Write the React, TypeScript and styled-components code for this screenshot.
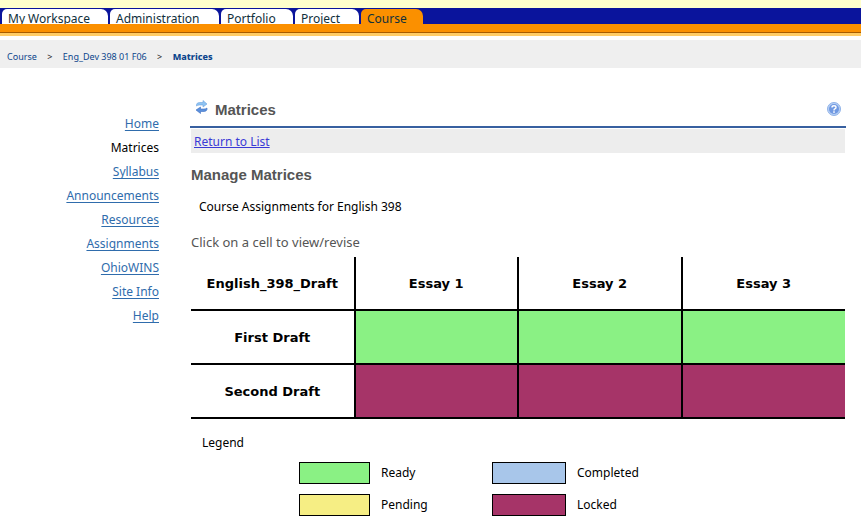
import React from "react";
import styled, { createGlobalStyle } from "styled-components";

const GlobalStyle = createGlobalStyle`
  * { box-sizing: border-box; }
  body {
    margin: 0;
    background: #fff;
    color: #000;
    font-family: "Noto Sans", "Open Sans", sans-serif;
    font-size: 12px;
    line-height: 16px;
  }
`;

const TabBar = styled.nav`
  display: flex;
  gap: 2px;
  height: 36px;
  padding: 1px 2px 0;
  border-top: 8px solid #ffffcc;
  border-bottom: 3px solid #ffcc66;
  background: linear-gradient(#0a149c 0 16px, #fb9000 16px 24px, #a85c00 24px);
`;

const Tab = styled.a<{ $width: number; $active?: boolean }>`
  width: ${(p) => p.$width}px;
  height: 15px;
  padding-left: 6px;
  overflow: hidden;
  border-radius: 5px 7px 0 0;
  background: ${(p) => (p.$active ? "#fb9000" : "#fff")};
  color: #10303c;
  font-size: 12px;
  line-height: 20px;
  text-decoration: none;
  white-space: nowrap;
`;

const Breadcrumbs = styled.nav`
  display: flex;
  align-items: center;
  height: 28px;
  margin-top: 4px;
  padding: 6px 7px 0;
  background: #efefef;
  color: #222;
  font-size: 9px;
`;

const Crumb = styled.a<{ $current?: boolean }>`
  color: #0c458c;
  font-weight: ${(p) => (p.$current ? 800 : 400)};
  text-decoration: none;
`;

const Separator = styled.span`
  width: 26px;
  text-align: center;
`;

const Body = styled.div`
  display: grid;
  grid-template-columns: 159px minmax(0, 1fr);
  column-gap: 32px;
  padding: 29px 16px 0 0;
`;

const ToolList = styled.ul`
  display: flex;
  flex-direction: column;
  gap: 8px;
  margin: 0;
  padding: 19px 0 0;
  list-style: none;
  text-align: right;
`;

const ToolLink = styled.a<{ $current?: boolean }>`
  color: ${(p) => (p.$current ? "#000" : "#2f6cac")};
  text-decoration: ${(p) => (p.$current ? "none" : "underline")};
  text-decoration-skip-ink: none;
  text-underline-offset: 2px;
`;

const ToolHeader = styled.header`
  display: flex;
  align-items: center;
  gap: 7px;
  height: 31px;
  margin: 0 -1px;
  padding: 0 5px 6px;
  border-bottom: 2px solid #3860a0;
`;

const ToolTitle = styled.h1`
  flex: 1;
  margin: 0;
  padding-top: 3px;
  color: #555;
  font-family: "Liberation Sans", sans-serif;
  font-size: 15px;
  line-height: 18px;
`;

const IconButton = styled.button<{ $raised?: boolean }>`
  display: flex;
  padding: 0 0 ${(p) => (p.$raised ? 4 : 0)}px;
  border: 0;
  background: none;
  cursor: pointer;
`;

const ActionBar = styled.div`
  height: 24px;
  margin-top: 1px;
  padding: 5px 3px 0;
  background: #ededed;
`;

const ActionLink = styled.a`
  color: #3a3ad6;
`;

const SectionTitle = styled.h2`
  margin: 13px 0 0;
  color: #555;
  font-family: "Liberation Sans", sans-serif;
  font-size: 15px;
  line-height: 18px;
`;

const Description = styled.p`
  margin: 15px 8px 0;
`;

const Hint = styled.p`
  margin: 19px 0 0;
  color: #555;
  font-size: 13px;
`;

const Matrix = styled.table`
  width: 100%;
  margin-top: 7px;
  border-collapse: collapse;
  table-layout: fixed;
`;

const HeadCell = styled.th`
  height: 54px;
  padding: 2px 0 0;
  border-right: 2px solid #000;
  border-bottom: 2px solid #000;
  font-family: "DejaVu Sans", sans-serif;
  font-size: 13px;
  font-weight: 700;
  thead & { height: 53px; }
  &:last-child { border-right: 0; }
`;

const StatusCell = styled.td<{ $color: string }>`
  padding: 0;
  border-right: 2px solid #000;
  border-bottom: 2px solid #000;
  background: ${(p) => p.$color};
  &:last-child { border-right: 0; }
`;

const LegendTitle = styled.h3`
  margin: 16px 11px 0;
  font-size: 12px;
  font-weight: 400;
`;

const Legend = styled.ul`
  display: grid;
  grid-template-columns: 193px 193px;
  row-gap: 10px;
  margin: 11px 0 0 108px;
  padding: 0;
  list-style: none;
`;

const LegendItem = styled.li`
  display: flex;
  align-items: center;
  gap: 11px;
`;

const Swatch = styled.span<{ $color: string; $wide?: boolean }>`
  width: ${(p) => (p.$wide ? 74 : 71)}px;
  height: 22px;
  border: 1px solid #000;
  background: ${(p) => p.$color};
`;

const RefreshIcon = () => (
  <svg width="13" height="14" viewBox="0 0 13 14" aria-hidden="true">
    <path d="M1.5 6 V4.5 Q2 2.5 4.5 2.5 H8 V.5 L12 4 L8 7 V5 H4.5 Q2.5 5 1.5 6Z" fill="#8fc4f2" stroke="#6ba2e0" strokeWidth=".6" />
    <path d="M12 8 V9.5 Q11.5 11.5 9 11.5 H5.5 V13.5 L1 10 L5.5 7 V9 H9 Q11 9 12 8Z" fill="#5b90dc" stroke="#3c6fc2" strokeWidth=".6" />
  </svg>
);

const HelpIcon = () => (
  <svg width="14" height="14" viewBox="0 0 14 14" aria-hidden="true">
    <circle cx="7" cy="7" r="6.5" fill="#b8d0f4" stroke="#8fb2e8" />
    <circle cx="7" cy="7" r="5" fill="#7099e2" />
    <path d="M5 5.5 Q5 3.8 7 3.8 Q9 3.8 9 5.4 Q9 6.3 7.8 6.9 Q7 7.3 7 8.4" fill="none" stroke="#fff" strokeWidth="1.4" />
    <rect x="6.2" y="9.3" width="1.6" height="1.5" fill="#fff" />
  </svg>
);

const tabs = [
  { label: "My Workspace", width: 106 },
  { label: "Administration", width: 109 },
  { label: "Portfolio", width: 72 },
  { label: "Project", width: 64 },
  { label: "Course", width: 62 },
];

const tools = ["Home", "Matrices", "Syllabus", "Announcements", "Resources", "Assignments", "OhioWINS", "Site Info", "Help"];

const status = { ready: "#8af184", pending: "#f6ee84", completed: "#a8c6ea", locked: "#a63468" };

const columns = ["Essay 1", "Essay 2", "Essay 3"];
const rows = [
  { label: "First Draft", color: status.ready },
  { label: "Second Draft", color: status.locked },
];

const legend = [
  { label: "Ready", color: status.ready },
  { label: "Completed", color: status.completed, wide: true },
  { label: "Pending", color: status.pending },
  { label: "Locked", color: status.locked, wide: true },
];

export default function App() {
  return (
    <>
      <GlobalStyle />
      <TabBar aria-label="Sites">
        {tabs.map((t) => (
          <Tab key={t.label} href="#" $width={t.width} $active={t.label === "Course"}>{t.label}</Tab>
        ))}
      </TabBar>
      <Breadcrumbs aria-label="Breadcrumb">
        <Crumb href="#">Course</Crumb>
        <Separator>&gt;</Separator>
        <Crumb href="#">Eng_Dev 398 01 F06</Crumb>
        <Separator>&gt;</Separator>
        <Crumb href="#" $current>Matrices</Crumb>
      </Breadcrumbs>
      <Body>
        <ToolList>
          {tools.map((t) => (
            <li key={t}><ToolLink href="#" $current={t === "Matrices"}>{t}</ToolLink></li>
          ))}
        </ToolList>
        <main>
          <ToolHeader>
            <IconButton aria-label="Refresh" $raised><RefreshIcon /></IconButton>
            <ToolTitle>Matrices</ToolTitle>
            <IconButton aria-label="Help"><HelpIcon /></IconButton>
          </ToolHeader>
          <ActionBar><ActionLink href="#">Return to List</ActionLink></ActionBar>
          <SectionTitle>Manage Matrices</SectionTitle>
          <Description>Course Assignments for English 398</Description>
          <Hint>Click on a cell to view/revise</Hint>
          <Matrix>
            <thead>
              <tr>
                <HeadCell scope="col">English_398_Draft</HeadCell>
                {columns.map((c) => <HeadCell key={c} scope="col">{c}</HeadCell>)}
              </tr>
            </thead>
            <tbody>
              {rows.map((r) => (
                <tr key={r.label}>
                  <HeadCell scope="row">{r.label}</HeadCell>
                  {columns.map((c) => <StatusCell key={c} $color={r.color} />)}
                </tr>
              ))}
            </tbody>
          </Matrix>
          <LegendTitle>Legend</LegendTitle>
          <Legend>
            {legend.map((l) => (
              <LegendItem key={l.label}><Swatch $color={l.color} $wide={l.wide} />{l.label}</LegendItem>
            ))}
          </Legend>
        </main>
      </Body>
    </>
  );
}
